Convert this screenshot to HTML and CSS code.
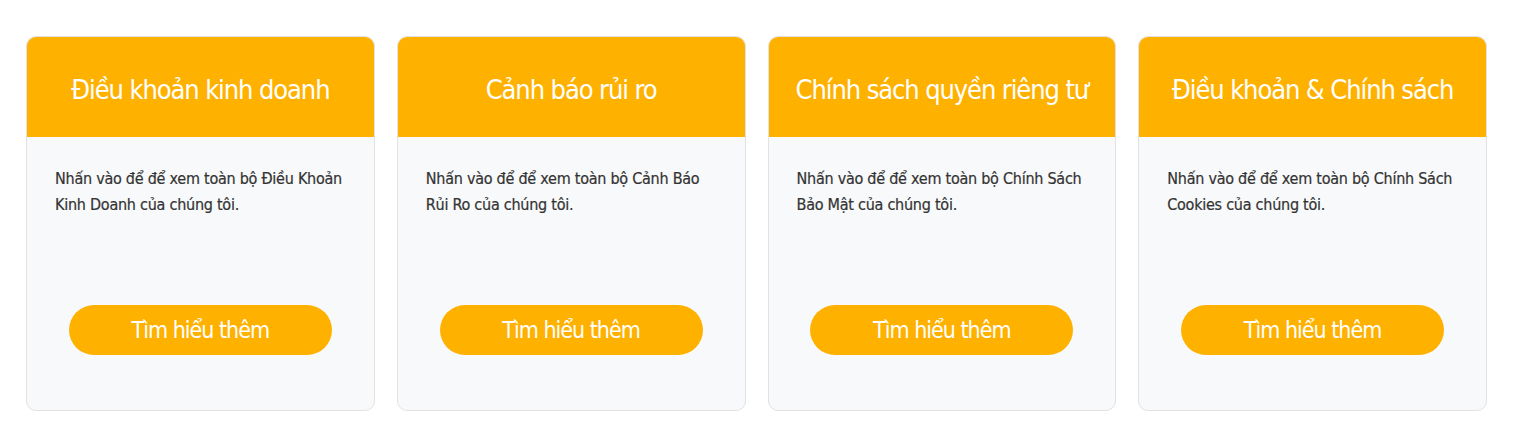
FILE: index.html
```html
<!DOCTYPE html>
<html lang="vi">
<head>
    <meta charset="UTF-8">
    <meta name="viewport" content="width=device-width, initial-scale=1.0">
    <title>Chính sách & Điều khoản</title>
    <link rel="stylesheet" href="styles.css">
</head>
<body>

    <div class="cards">
        <div class="card">
            <div class="card-head"><h3>Điều khoản kinh doanh</h3></div>
            <div class="card-body">
                <p>Nhấn vào để để xem toàn bộ Điều Khoản Kinh Doanh của chúng tôi.</p>
                <a class="btn" href="#">Tìm hiểu thêm</a>
            </div>
        </div>

        <div class="card">
            <div class="card-head"><h3>Cảnh báo rủi ro</h3></div>
            <div class="card-body">
                <p>Nhấn vào để để xem toàn bộ Cảnh Báo Rủi Ro của chúng tôi.</p>
                <a class="btn" href="#">Tìm hiểu thêm</a>
            </div>
        </div>

        <div class="card">
            <div class="card-head"><h3>Chính sách quyền riêng tư</h3></div>
            <div class="card-body">
                <p>Nhấn vào để để xem toàn bộ Chính Sách Bảo Mật của chúng tôi.</p>
                <a class="btn" href="#">Tìm hiểu thêm</a>
            </div>
        </div>

        <div class="card">
            <div class="card-head"><h3>Điều khoản &amp; Chính sách</h3></div>
            <div class="card-body">
                <p>Nhấn vào để để xem toàn bộ Chính Sách Cookies của chúng tôi.</p>
                <a class="btn" href="#">Tìm hiểu thêm</a>
            </div>
        </div>
    </div>

</body>
</html>
```

FILE: styles.css
```css
body {
    font-family: "DejaVu Sans Condensed", "DejaVu Sans", sans-serif;
    font-stretch: condensed;
    background-color: #ffffff;
    margin: 0;
    padding: 36px 32px 0 26px;
}
.cards {
    display: flex;
    gap: 22px;
}
.card {
    flex: 1;
    height: 375px;
    display: flex;
    flex-direction: column;
    background: #f8f9fa;
    border: 1px solid #e2e2e2;
    border-radius: 10px;
    overflow: hidden;
    box-sizing: border-box;
}
.card-head {
    height: 100px;
    flex-shrink: 0;
    padding-top: 4px;
    box-sizing: border-box;
    background: #ffb100;
    display: flex;
    align-items: center;
    justify-content: center;
}
.card-head h3 {
    margin: 0;
    color: #ffffff;
    font-size: 27px;
    font-weight: normal;
    letter-spacing: -1.1px;
    white-space: nowrap;
}
.card-body {
    flex: 1;
    display: flex;
    flex-direction: column;
    align-items: center;
    padding: 29px 28px 55px;
}
.card-body p {
    align-self: stretch;
    margin: 0;
    color: #333333;
    font-size: 16px;
    line-height: 26px;
    letter-spacing: -0.25px;
    -webkit-text-stroke: 0.2px #333333;
}
.btn {
    margin-top: auto;
    width: 263px;
    height: 50px;
    display: flex;
    align-items: center;
    justify-content: center;
    background: #ffb100;
    color: #ffffff;
    border-radius: 25px;
    text-decoration: none;
    font-size: 23px;
    letter-spacing: -1px;
}
```
